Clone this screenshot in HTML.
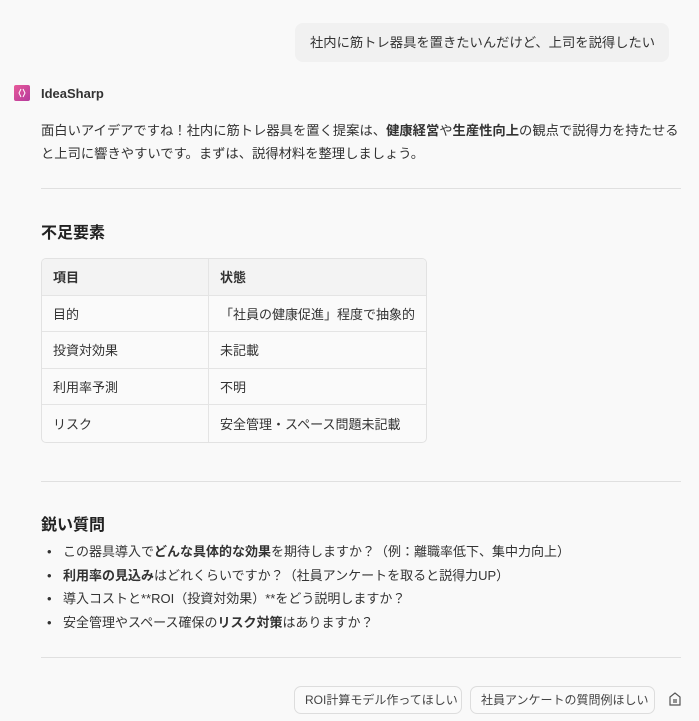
<!DOCTYPE html>
<html><head><meta charset="utf-8"><style>
*{box-sizing:border-box;margin:0;padding:0}
body{width:699px;height:721px;overflow:hidden;background:#f9f9f9;font-family:"Liberation Sans","Noto Sans CJK JP",sans-serif;color:#333;font-size:13.3px;position:relative}
.a{position:absolute}
.user{left:295px;top:23px;width:374px;height:39px;background:#f1f1f1;border-radius:8px;line-height:39px;padding-left:15px;font-size:13.3px;color:#333;white-space:nowrap}
.logo{left:14px;top:85px;width:16px;height:16px;border-radius:2px;background:linear-gradient(135deg,#e85a9a,#b53a9c)}
.name{left:41px;top:86px;font-size:13px;font-weight:bold;color:#333}
p.a{left:41px;top:119px;width:648px;line-height:23px}
hr{position:absolute;left:41px;width:640px;border:0;border-top:1px solid #e0e0e0}
h3{position:absolute;left:41px;font-size:16px;font-weight:bold;color:#222}
table{position:absolute;left:41px;top:258px;width:386px;border-collapse:separate;border-spacing:0;border:1px solid #e2e2e2;border-radius:5px;overflow:hidden;background:#fafafa}
td{height:36.6px;padding-left:11px;border-bottom:1px solid #e4e4e4;font-size:13px;color:#333;white-space:nowrap}
td:first-child{width:167px;border-right:1px solid #e4e4e4}
tr:last-child td{border-bottom:0}
tr:first-child td{background:#f3f3f3;font-weight:bold}
ul{position:absolute;left:47px;top:540px;list-style:none;line-height:23.5px;font-size:13px;white-space:nowrap}
ul li:before{content:"•";position:absolute;left:0}
ul li{padding-left:16px}
.btn{top:686px;height:28px;border:1px solid #ddd;border-radius:7px;line-height:26px;font-size:12px;padding:0 10px;color:#444;background:#fafafa;white-space:nowrap;text-align:center}
</style></head><body>
<div class="a user">社内に筋トレ器具を置きたいんだけど、上司を説得したい</div>
<div class="a logo"><svg width="16" height="16"><path d="M7 4 L5 8 L7 12 M9 4 L11 8 L9 12" stroke="#fff" stroke-width="1" fill="none"/></svg></div>
<div class="a name">IdeaSharp</div>
<p class="a">面白いアイデアですね！社内に筋トレ器具を置く提案は、<b>健康経営</b>や<b>生産性向上</b>の観点で説得力を持たせると上司に響きやすいです。まずは、説得材料を整理しましょう。</p>
<hr style="top:188px">
<h3 style="top:219px">不足要素</h3>
<table>
<tr><td>項目</td><td>状態</td></tr>
<tr><td>目的</td><td>「社員の健康促進」程度で抽象的</td></tr>
<tr><td>投資対効果</td><td>未記載</td></tr>
<tr><td>利用率予測</td><td>不明</td></tr>
<tr><td>リスク</td><td>安全管理・スペース問題未記載</td></tr>
</table>
<hr style="top:481px">
<h3 style="top:511px">鋭い質問</h3>
<ul>
<li>この器具導入で<b>どんな具体的な効果</b>を期待しますか？（例：離職率低下、集中力向上）</li>
<li><b>利用率の見込み</b>はどれくらいですか？（社員アンケートを取ると説得力UP）</li>
<li>導入コストと**ROI（投資対効果）**をどう説明しますか？</li>
<li>安全管理やスペース確保の<b>リスク対策</b>はありますか？</li>
</ul>
<hr style="top:657px">
<div class="a btn" style="left:294px;width:168px">ROI計算モデル作ってほしい</div>
<div class="a btn" style="left:470px;width:185px">社員アンケートの質問例ほしい</div>
<svg class="a" style="left:667px;top:691px" width="16" height="16"><path d="M3 6 L8 2 L13 6 L13 14 L3 14 Z M6 9 L10 9 M6 11 L10 11" stroke="#555" fill="none" stroke-width="1.2"/></svg>
</body></html>
